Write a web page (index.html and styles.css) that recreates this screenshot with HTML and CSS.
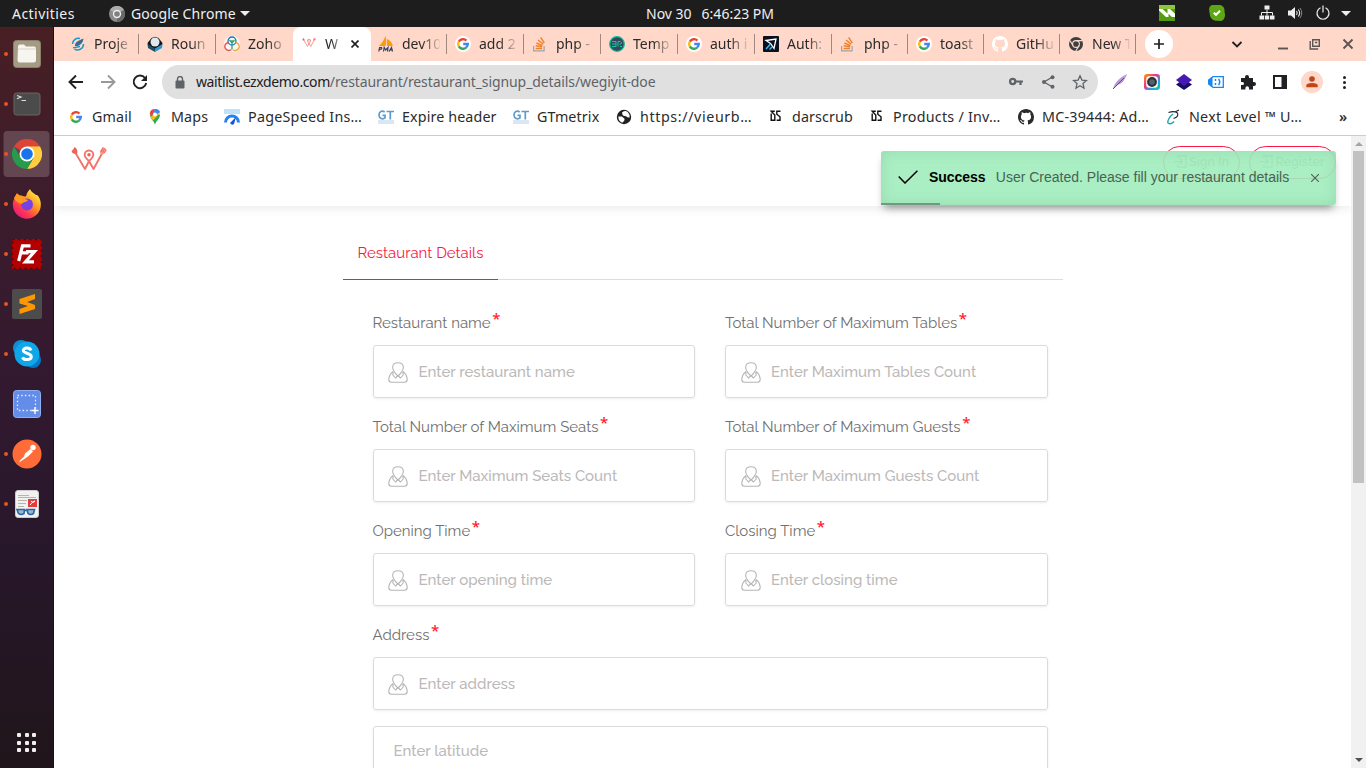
FILE: index.html
```html
<!DOCTYPE html>
<html lang="en">
<head>
<meta charset="utf-8">
<title>Restaurant Details</title>
<link rel="stylesheet" href="styles.css">
</head>
<body>
<svg class="defs" width="0" height="0">
  <defs>
    <symbol id="google" viewBox="0 0 16 16"><g fill="none" stroke-width="2.4"><path stroke="#ea4335" d="M3.8 5.6A4.8 4.8 0 0 1 11.4 4.6"/><path stroke="#fbbc05" d="M3.8 5.6a4.8 4.8 0 0 0 0 4.8"/><path stroke="#34a853" d="M3.8 10.4a4.8 4.8 0 0 0 7.3 1.2"/><path stroke="#4285f4" d="M8.2 8h4.6a4.8 4.8 0 0 1-1.7 3.6"/></g></symbol>
    <symbol id="stack" viewBox="0 0 16 16"><path fill="none" stroke="#9aa6ac" stroke-width="1.2" d="M1.600 10v4.800h10.500V10"/><path stroke="#f48024" stroke-width="1.4" d="M3.600 12.500h6.400M3.700 9.800l6.400 1M4.400 7l6 2.600M6 4l5.200 4.300M8.600 1.400l3.700 5.600"/></symbol>
    <symbol id="github" viewBox="0 0 16 16"><path fill="currentColor" d="M8 0C3.58 0 0 3.58 0 8c0 3.54 2.29 6.53 5.47 7.59.4.07.55-.17.55-.38 0-.19-.01-.82-.01-1.49-2.01.37-2.53-.49-2.69-.94-.09-.23-.48-.94-.82-1.13-.28-.15-.68-.52-.01-.53.63-.01 1.08.58 1.23.82.72 1.21 1.87.87 2.33.66.07-.52.28-.87.51-1.07-1.78-.2-3.64-.89-3.64-3.95 0-.87.31-1.59.82-2.15-.08-.2-.36-1.02.08-2.12 0 0 .67-.21 2.2.82A7.6 7.6 0 0 1 8 3.86c.68 0 1.36.09 2 .27 1.53-1.04 2.2-.82 2.2-.82.44 1.1.16 1.92.08 2.12.51.56.82 1.27.82 2.15 0 3.07-1.87 3.75-3.65 3.95.29.25.54.73.54 1.48 0 1.07-.01 1.93-.01 2.2 0 .21.15.46.55.38A8.01 8.01 0 0 0 16 8c0-4.42-3.58-8-8-8z"/></symbol>
    <symbol id="wlogo" viewBox="0 0 36 26"><g fill="none" stroke="#f4736b" stroke-width="1.900" stroke-linejoin="round" stroke-linecap="round"><path d="M4.500 7l9.500 16L18 15l4.500 8L31 7.500"/><path d="M18 15c-3-2.500-4.300-4.300-4.300-6.200a4.300 4.300 0 0 1 8.600 0c0 1.900-1.300 3.700-4.300 6.200z"/></g><circle cx="18" cy="8.800" r="1.800" fill="#f0635c"/><path fill="#f0635c" d="M3.500 1c2.500 1.500 3.700 4.300 2.500 7C2.500 8.500.5 6.800.7 4.800 1.500 4 3 3 3.500 1z"/><path fill="#f79f99" d="M29 4.500L32 1l3.500 2-1.500 4-3.500 1.500-1.500-1z"/><path d="M30 6l2-4.500M31.500 6.500l2.300-4M32.500 7.500l3-3.500" fill="none" stroke="#f0635c"/></symbol>
    <symbol id="person" viewBox="0 0 20 21"><g fill="none" stroke="#b5b5b5" stroke-width="1.100" stroke-linejoin="round"><path d="M6.200 9.500C4.800 7.800 4.500 6 4.700 4.600 5 2.200 7 .8 10 .8s5 1.400 5.300 3.800c.2 1.400-.1 3.200-1.500 4.900Q13 11.500 10 14 7 11.500 6.200 9.500z"/><path d="M5 9.500C3 11 1 13.500.8 17.500c0 1.800 1 2.700 2.700 2.700h13c1.700 0 2.700-.9 2.700-2.700C19 13.500 17 11 15 9.500M5.200 9.800L4.800 13l2.700 3L10 13.500l2.500 2.500 2.700-3-.4-3.200"/></g></symbol>
    <symbol id="signin" viewBox="0 0 14 14"><path fill="none" stroke="currentColor" stroke-width="1.200" d="M4 3.500V1h9v12H4v-2.500M0 7h9M6 4l3 3-3 3"/></symbol>
    <symbol id="gt" viewBox="0 0 16 16"><path fill="#dbe6f2" d="M0 11h16v4H0z"/><path fill="none" stroke="#5c9bcb" stroke-width="1.700" d="M6.700 3.200C4 .8 1 3 1 6c0 3.600 3.800 4.700 6 2.900V6.300H4.500M8.500 2.500H16M12.300 2.500v8"/></symbol>
    <symbol id="ds" viewBox="0 0 16 16"><path fill="none" stroke="#111" stroke-width="1.400" d="M3.200 4.500v6.800h3.600V6L3.200 2.200h3.600M12.500 2.200H8.800v3l3.200 2.600v3.500H8.600"/></symbol>
    <symbol id="chrome" viewBox="0 0 30 30"><path fill="#db4437" d="M15 15L2 7.500A15 15 0 0 1 28 7.500z"/><path fill="#ffcd40" d="M15 15V7.500h13A15 15 0 0 1 15 30l6.500-11z"/><path fill="#259b4b" d="M15 15l6.500 3.700L15 30A15 15 0 0 1 2 7.500l6.500 11z"/><circle cx="15" cy="15" r="7.500" fill="#fff"/><circle cx="15" cy="15" r="5.800" fill="#1a73e8"/></symbol>
    <symbol id="monochrome" viewBox="0 0 16 16"><circle cx="8" cy="8" r="7" fill="currentColor"/><g fill="none" stroke="#ffd8ca" stroke-width="1.100"><circle cx="8" cy="8" r="3.400"/><path d="M8 4.600h6.300M5 9.600L2 4.500M11 9.600L7.800 15"/></g></symbol>
  </defs>
</svg>

<div class="topbar">
  <span class="activities">Activities</span>
  <div class="appmenu">
    <svg width="16" height="16" viewBox="0 0 16 16"><circle cx="8" cy="8" r="8" fill="#8b8b8b"/><path d="M8 8L1 4a8 8 0 0 1 14 0z" fill="#aaa"/><path d="M8 8v8a8 8 0 0 0 7-12z" fill="#686868"/><circle cx="8" cy="8" r="4.200" fill="#eee"/><circle cx="8" cy="8" r="2.800" fill="#808080"/></svg>
    <span class="appname">Google Chrome</span>
    <i class="caret"></i>
  </div>
  <div class="clock"><span>Nov 30</span><span>6:46:23 PM</span></div>
  <div class="tray">
    <svg class="t1" width="16" height="16" viewBox="0 0 16 16"><path fill="#559c10" d="M0 0h16v16H0z"/><path fill="#8cc63a" d="M0 0h16v4H0z"/><path fill="#fff" d="M0 4h3.500l5 4.500V4H11l5 4.800V12h-3L9.500 8.800V12H7L0 5.500z"/></svg>
    <svg class="t2" width="16" height="16" viewBox="0 0 16 16"><path fill="#5fa614" d="M3 0h7c4 0 6 3 5.500 7 1 3 .5 6-1.500 8-2 1.500-4 .8-5 .8C5 16 1 14 .8 9-.5 4 0 1 3 0z"/><path fill="none" stroke="#fff" stroke-width="2" d="M4.800 7.700L7 9.800l4-4"/></svg>
    <svg class="t3" width="16" height="16" viewBox="0 0 16 16"><path fill="#eee" d="M5.500.5h5v4h-5zM.5 10.500h4.500v4H.5zM5.800 10.500h4.400v4H5.800zM11 10.500h4.500v4H11z"/><path fill="none" stroke="#eee" d="M8 4.500v6M2.500 10.500v-3h11v3"/></svg>
    <svg class="t4" width="16" height="16" viewBox="0 0 16 16"><path fill="#eee" d="M1 5.500h3L8 2v12L4 10.500H1z"/><path fill="none" stroke="#eee" stroke-width="1.100" d="M9.500 6q1.500 2 0 4M11.300 4.500q2.700 3.500 0 7"/><path fill="none" stroke="#888" d="M13 3q3.500 5 0 10"/></svg>
    <svg class="t5" width="16" height="16" viewBox="0 0 16 16"><path fill="none" stroke="#eee" stroke-width="1.200" d="M5.500 2.800a6 6 0 1 0 5 0M8 .5v7"/></svg>
    <i class="caret"></i>
  </div>
</div>

<div class="desktop">
  <nav class="dock">
    <div class="app on"><svg width="30" height="30" viewBox="0 0 30 30"><rect x="1.500" y="1.500" width="27" height="27" rx="3" fill="#a59b85" stroke="#888069"/><path fill="#f7f5ef" d="M6 7.500q0-2 2-2h4l2 2h8q2 0 2 2V21q0 2.500-2.500 2.500h-14Q5.500 23.500 5.500 21z"/><path stroke="#d7d3c8" d="M6 10h18"/></svg></div>
    <div class="app on"><svg width="30" height="30" viewBox="0 0 30 30"><rect x="2" y="4" width="26" height="22" rx="2.500" fill="#4b4b4b" stroke="#6b6463"/><path fill="none" stroke="#ddd" stroke-width="1.200" d="M5 6.500l4 1.500-4 1.700M9.500 11.500H14"/></svg></div>
    <div class="app on active"><svg width="30" height="30"><use href="#chrome"/></svg></div>
    <div class="app on"><svg width="30" height="30" viewBox="0 0 30 30"><defs><linearGradient id="fx" x1="1" y1="0" x2=".2" y2="1"><stop offset=".1" stop-color="#fff44f"/><stop offset=".45" stop-color="#ff9a20"/><stop offset=".75" stop-color="#ff3750"/><stop offset="1" stop-color="#e31587"/></linearGradient></defs><path fill="url(#fx)" d="M18 0c1 3 4 4 6 6 2-1 5 5 4.800 9A14 14 0 1 1 2 10l3-5c1 1 2 2 4 2l5 .5c1-4 2-5 4-7.500z"/><circle cx="15" cy="15.500" r="6" fill="#7542e5"/><path fill="#ff9a20" d="M2 9l3-5c2 3 4 2 6 3 1 2 1 3 5 4-2 3-4 1-6 4-3-1-6-2-8-6z"/></svg></div>
    <div class="app on"><svg width="30" height="30" viewBox="0 0 30 30"><path fill="#b30000" d="M0 0h30v30H0z"/><path fill="none" stroke="#4a0810" stroke-width="1.500" stroke-dasharray="2 3.600" d="M.5.500h29v29H.5z"/><path fill="none" stroke="#fff" stroke-width="3.200" d="M18.500 6.800h-8L6.700 22M9.500 13.800h7M14 12.600h8.500L13.500 22.800H22"/></svg></div>
    <div class="app on"><svg width="30" height="30" viewBox="0 0 30 30"><rect width="30" height="30" rx="2" fill="#4c4c4c"/><path fill="#ff9800" d="M7.500 10L23 5v5l-8 3 8 3v4L7.500 25v-5l8.500-3-8.500-2.500z"/></svg></div>
    <div class="app on"><svg width="30" height="30" viewBox="0 0 30 30"><circle cx="9" cy="9" r="8" fill="#0e8fd4"/><circle cx="21" cy="21" r="8" fill="#0676c8"/><circle cx="15" cy="15" r="12.500" fill="#10a7e8"/><path fill="none" stroke="#fff" stroke-width="3" d="M19 11.500c-1.500-3.500-8-3-7.700.3.400 2.700 7.700 2.200 8 5.700.2 4-7.300 4-8.800.8"/></svg></div>
    <div class="app"><svg width="30" height="30" viewBox="0 0 30 30"><rect x="1.500" y="1.500" width="27" height="27" rx="3" fill="#648de9" stroke="#8fb0f3"/><path fill="none" stroke="#e4ecff" stroke-width="1.300" stroke-dasharray="1.500 2.200" d="M5.500 6.500h18v15h-18z"/><path stroke="#fff" stroke-width="1.400" d="M23 18v7M19.500 21.500h7"/></svg></div>
    <div class="app on"><svg width="30" height="30" viewBox="0 0 30 30"><circle cx="15" cy="15" r="14.500" fill="#ff6c37"/><circle cx="21" cy="8.500" r="2.700" fill="#fff"/><path fill="#fff" d="M18.500 10l2.500 2.500-5 5-9 6 1-2 4-4 1-3z"/></svg></div>
    <div class="app on"><svg width="30" height="30" viewBox="0 0 30 30"><rect x="3.500" y="1.500" width="23" height="27" rx="2.500" fill="#f1f1ef" stroke="#ccc"/><path stroke="#b7b4ac" d="M6 6.500h11M6 8.500h18M6 11.500h9M6 14.500h8M6 17.500h6"/><path fill="#e53b3b" d="M16 10h9v8h-9z"/><path fill="none" stroke="#fff" d="M18 16q3-4 5-4-2 3-4 0"/><g fill="#9fb6c8" stroke="#2765a8" stroke-width="1.600"><path d="M5 20.500h7.500l-.5 4q-3 2-5.500 0zM15 20.500h7.500l-1 4q-3 2-5.500 0zM12 21.500h3"/></g></svg></div>
    <div class="grid-btn"><i></i><i></i><i></i><i></i><i></i><i></i><i></i><i></i><i></i></div>
  </nav>

  <div class="window">
    <div class="tabstrip">
      <div class="tab"><svg viewBox="0 0 16 16"><path fill="none" stroke="#1698cb" stroke-width="1.500" d="M10 2.500A6 6 0 0 0 2.500 8M4.500 13.200A6 6 0 0 0 13.500 8"/><path fill="#3a6c92" d="M5 10c0-4.500 3.500-5 8.500-7.500-.5 4.500-3.500 8-8.500 7.500z"/><path stroke="#1698cb" stroke-width="1.300" d="M3 11.800l7-1.300"/></svg><span>Proje</span></div>
      <div class="tab"><svg viewBox="0 0 16 16"><path fill="#151515" d="M.5 7l4-5L8 .8 11.500 2l4 5-1 4L8 15l-6.500-4z"/><path fill="#1b4f66" d="M.5 8l7.500 4.500V16L1 12z"/><path fill="#2b9ad0" d="M15.500 8L8 12.500V16l7-4z"/><circle cx="8" cy="6" r="4.500" fill="#dfe8ee"/></svg><span>Roun</span></div>
      <div class="tab"><svg viewBox="0 0 16 16"><circle cx="8" cy="8" r="8" fill="#fff" opacity=".7"/><g fill="none" stroke-width="1.300"><circle cx="8" cy="5" r="4" stroke="#1480b8"/><path stroke="#e34b4b" d="M4.500 6.500a4 4 0 1 0 3 7"/><path stroke="#e7a93d" d="M11.500 6.500a4 4 0 1 1-3 7"/><path stroke="#35a17c" d="M8 4v9M5.500 4l2.500 3 2.500-3"/></g></svg><span>Zoho</span></div>
      <div class="tab current"><svg viewBox="0 0 16 16"><use href="#wlogo" x="1" y="1.500" width="14" height="10"/></svg><span>W</span><b class="close"><svg viewBox="0 0 8 8"><path d="M.5.500l7 7M7.500.500l-7 7"/></svg></b></div>
      <div class="tab"><svg viewBox="0 0 16 16"><path fill="#f89c0e" d="M7.500 0c1 4 1 7 0 10H1C4 7 6 4 7.500 0zM9 3c4 2 5 4 6 7H9z"/><path fill="none" stroke="#34415f" stroke-width="1.200" d="M.8 15.500l.8-4h2q1 1.500-2 2M5.500 15.500l.7-4 1.500 2.500L10 11.500l-.5 4M11 15.500l2.500-4 1 4M12 14h2"/></svg><span>dev10</span></div>
      <div class="tab halo"><svg><use href="#google"/></svg><span>add 2</span></div>
      <div class="tab"><svg><use href="#stack"/></svg><span>php -</span></div>
      <div class="tab"><svg viewBox="0 0 16 16"><circle cx="8" cy="8" r="7.300" fill="#34495e" stroke="#10b997" stroke-width="1.300"/><path fill="none" stroke="#16c59a" d="M3 5.500h4v5H3m0-2.500h4M9 10.500v-5h2.500q2 1 .5 2.500h-1.500M11 10.500h2"/></svg><span>Temp</span></div>
      <div class="tab halo"><svg><use href="#google"/></svg><span>auth i</span></div>
      <div class="tab"><svg viewBox="0 0 16 16"><rect width="16" height="16" rx="1" fill="#0b1020"/><path fill="none" stroke="#fff" stroke-width="1.300" d="M3 4.500L13 3l-2 9.500-3.500-5z"/><path stroke="#31bdf2" stroke-width="1.500" d="M3 13l4.500-5M6.500 13.500L9 11"/></svg><span>Auth:</span></div>
      <div class="tab n"><svg><use href="#stack"/></svg><span>php -</span></div>
      <div class="tab n halo"><svg><use href="#google"/></svg><span>toast</span></div>
      <div class="tab n white"><svg><use href="#github"/></svg><span>GitHu</span></div>
      <div class="tab n grey"><svg><use href="#monochrome"/></svg><span>New T</span></div>
      <div class="newtab"><svg width="12" height="12" viewBox="0 0 12 12"><path stroke="#222" stroke-width="1.700" d="M6 1v10M1 6h10"/></svg></div>
      <div class="wm">
        <svg width="12" height="12" viewBox="0 0 12 12"><path class="dark" d="M1.500 4L6 8.500 10.500 4"/></svg>
        <svg width="12" height="12" viewBox="0 0 12 12"><path d="M1 10.500h10"/></svg>
        <svg width="12" height="12" viewBox="0 0 12 12"><path stroke-width="1.400" d="M3.700 1.700h6.600v6.600H3.700zM6 4.500h2.300M1.200 3v8h8"/></svg>
        <svg width="12" height="12" viewBox="0 0 12 12"><path d="M1.500 1.500l9 9M10.500 1.500l-9 9"/></svg>
      </div>
    </div>

    <div class="toolbar">
      <div class="navs">
        <svg width="16" height="16" viewBox="0 0 16 16"><path d="M15 8H2M8 1.500L1.500 8 8 14.500"/></svg>
        <svg class="dim" width="16" height="16" viewBox="0 0 16 16"><path d="M1 8h13M8 1.500L14.500 8 8 14.500"/></svg>
        <svg width="16" height="16" viewBox="0 0 16 16"><path d="M13 4A6.300 6.300 0 1 0 14.200 9"/><path fill="#222" stroke="none" d="M15 1v6H9z"/></svg>
      </div>
      <div class="omnibox">
        <svg width="10" height="13" viewBox="0 0 10 13"><rect y="4.500" x=".5" width="9" height="8" rx="1" fill="#5f6368"/><path fill="none" stroke="#5f6368" stroke-width="1.400" d="M2.500 5V3a2.500 2.500 0 0 1 5 0v2"/></svg>
        <div class="url"><span class="host">waitlist.ezxdemo.com</span><span class="path">/restaurant/restaurant_signup_details/wegiyit-doe</span></div>
        <div class="acts">
          <svg width="16" height="16" viewBox="0 0 16 16"><circle cx="4.700" cy="7.500" r="2.600" stroke-width="2.300"/><path stroke-width="2.200" d="M7 7.500h8M12.500 7.500V11"/></svg>
          <svg width="16" height="16" viewBox="0 0 16 16"><path stroke-width="1.300" d="M12.500 3L4 8l8.500 5"/><g fill="#5f6368" stroke="none"><circle cx="12.500" cy="3.200" r="2"/><circle cx="4" cy="8" r="2"/><circle cx="12.500" cy="12.800" r="2"/></g></svg>
          <svg width="16" height="16" viewBox="0 0 16 16"><path stroke-width="1.300" d="M8 1.800l1.900 4.300 4.600.4-3.500 3.100 1 4.600L8 11.800l-4 2.400 1-4.600L1.500 6.500l4.600-.4z"/></svg>
        </div>
      </div>
      <div class="exts">
        <svg viewBox="0 0 16 16"><path fill="#b79ad8" d="M1 15C3 8 7 4 15 0c-2 6-5 10-10 11z"/><path stroke="#6b3ba0" fill="none" d="M1 15L12 4"/></svg>
        <svg viewBox="0 0 16 16"><defs><linearGradient id="cam" x1="0" y1="0" x2="1" y2="1"><stop stop-color="#ff9d00"/><stop offset=".4" stop-color="#f13482"/><stop offset=".7" stop-color="#16a9ef"/><stop offset="1" stop-color="#1fd27c"/></linearGradient></defs><rect width="16" height="16" rx="3" fill="url(#cam)"/><rect x="2.200" y="2.200" width="11.600" height="11.600" rx="3" fill="#fff"/><circle cx="8" cy="8" r="4.900" fill="#2a3238"/><circle cx="8" cy="8" r="2.800" fill="#53636d"/></svg>
        <svg viewBox="0 0 16 16"><path fill="#160c63" d="M0 10.500L8 5l8 5.500L8 16z"/><path fill="#4619b5" d="M0 6l8-6 8 6-8 6z"/></svg>
        <svg viewBox="0 0 16 16"><path fill="none" stroke="#1688f5" stroke-width="1.300" d="M5 2.600h10.300v10.800H5L.8 10V6z"/><path fill="#1688f5" d="M0 6l4.500-3.500v11L0 10z"/><path fill="none" stroke="#1688f5" stroke-width="1.500" d="M7.500 5v2M7.500 9v2M10.500 5q2.500 3 0 6"/></svg>
        <svg viewBox="0 0 16 16"><path fill="#202124" d="M1 4h4V3a2 2 0 0 1 4 0v1h4v4h1a2 2 0 0 1 0 4h-1v3.500H9V14a1.800 1.800 0 0 0-3.600 0v1.500H1V11h1.500a1.500 1.500 0 0 0 0-3H1z"/></svg>
        <svg viewBox="0 0 16 16"><path fill="none" stroke="#202124" stroke-width="2" d="M2 2h12v12H2z"/><path fill="#202124" d="M9.500 2H14v12H9.500z"/></svg>
        <div class="avatar"><svg viewBox="0 0 16 16"><circle cx="8" cy="4.500" r="3.200" fill="#bf4618"/><path fill="#bf4618" d="M1.500 14V12q0-3 6.500-3t6.500 3v2z"/></svg></div>
        <div class="kebab"><i></i><i></i><i></i></div>
      </div>
    </div>

    <div class="bookmarks">
      <a><svg><use href="#google"/></svg><span>Gmail</span></a>
      <a><svg viewBox="0 0 16 16"><path fill="#34a853" d="M8 16c-.7-4-5-6-5-10.500h10C13 10 8.700 12 8 16z"/><path fill="#4285f4" d="M8 0a5.500 5.500 0 0 1 4.700 3L7 10 4.500 7z"/><path fill="#fbbc04" d="M3.500 8L11 1.500 13 4 6 11.500z"/><path fill="#ea4335" d="M2.700 5A5.500 5.500 0 0 1 8 0L5 7z"/><path fill="#4285f4" d="M8 0q4 0 5 3L10 5 7 3z"/><circle cx="8" cy="5.500" r="2" fill="#fff"/></svg><span>Maps</span></a>
      <a><svg viewBox="0 0 16 16"><path fill="#bfe2fb" d="M0 0h16v5H0z"/><path fill="none" stroke="#2781f5" stroke-width="3" d="M1.500 13.500a6.500 6.500 0 0 1 13 0"/><path fill="#1657d5" d="M6 14l6-6-2 7q-2 2-4-1z"/></svg><span>PageSpeed Ins…</span></a>
      <a><svg><use href="#gt"/></svg><span>Expire header</span></a>
      <a><svg><use href="#gt"/></svg><span>GTmetrix</span></a>
      <a><svg viewBox="0 0 16 16"><circle cx="8" cy="8" r="7.200" fill="#202124"/><path fill="#fff" d="M2.300 7.500h3.500l2.500 2q1 2-2 4.200-4-1.500-4-6.200zM6 3.500q4-3 6.500.5 1.500 2 1.200 4.500l-2.500-.3q-1-1.500-3.200-1.200Q6 6 6 3.500z"/></svg><span>https://vieurb…</span></a>
      <a><svg><use href="#ds"/></svg><span>darscrub</span></a>
      <a><svg><use href="#ds"/></svg><span>Products / Inv…</span></a>
      <a><svg><use href="#github"/></svg><span>MC-39444: Ad…</span></a>
      <a><svg viewBox="0 0 16 16"><path fill="none" stroke="#18a3ad" stroke-width="1.400" d="M8 5C5 7 2 12 3 14q3 2 6-1.500"/><path fill="none" stroke="#223" stroke-width="1.100" d="M3.500 3.500q6-2 9 .5 1.500 4-4 5.500M10 3l4-2"/></svg><span>Next Level ™ U…</span></a>
      <b>»</b>
    </div>

    <div class="viewport">
      <div class="page">
        <header class="site-header">
          <svg class="logo" width="36" height="26"><use href="#wlogo"/></svg>
          <div class="auth">
            <a class="pill"><svg width="13" height="13"><use href="#signin"/></svg>Sign In</a>
            <a class="pill reg"><svg width="13" height="13"><use href="#signin"/></svg>Register</a>
          </div>
        </header>
        <main class="content">
          <div class="form-tabs"><a>Restaurant Details</a></div>
          <form class="form">
            <div class="field"><label>Restaurant name<sup>*</sup></label><div class="box"><svg><use href="#person"/></svg><input placeholder="Enter restaurant name"></div></div>
            <div class="field"><label>Total Number of Maximum Tables<sup>*</sup></label><div class="box"><svg><use href="#person"/></svg><input placeholder="Enter Maximum Tables Count"></div></div>
            <div class="field"><label>Total Number of Maximum Seats<sup>*</sup></label><div class="box"><svg><use href="#person"/></svg><input placeholder="Enter Maximum Seats Count"></div></div>
            <div class="field"><label>Total Number of Maximum Guests<sup>*</sup></label><div class="box"><svg><use href="#person"/></svg><input placeholder="Enter Maximum Guests Count"></div></div>
            <div class="field"><label>Opening Time<sup>*</sup></label><div class="box"><svg><use href="#person"/></svg><input placeholder="Enter opening time"></div></div>
            <div class="field"><label>Closing Time<sup>*</sup></label><div class="box"><svg><use href="#person"/></svg><input placeholder="Enter closing time"></div></div>
            <div class="field wide"><label>Address<sup>*</sup></label><div class="box"><svg><use href="#person"/></svg><input placeholder="Enter address"></div></div>
            <div class="field wide"><div class="box plain"><input placeholder="Enter latitude"></div></div>
          </form>
        </main>
        <div class="toast">
          <svg class="tick" width="20" height="14" viewBox="0 0 20 14"><path fill="none" stroke="#000" stroke-width="1.500" d="M.7 6.500L7 13 19.400.7"/></svg>
          <strong>Success</strong>
          <span class="msg">User Created. Please fill your restaurant details</span>
          <svg class="x" width="8" height="8" viewBox="0 0 8 8"><path stroke="#476454" stroke-width="1.100" d="M0 0l8 8M8 0L0 8"/></svg>
          <i class="progress"></i>
        </div>
      </div>
      <div class="scrollbar"><i class="up"></i><div class="thumb"></div><i class="down"></i></div>
    </div>
  </div>
</div>
</body>
</html>
```
FILE: styles.css
```css
* { box-sizing: border-box; }
body { margin: 0; width: 1366px; height: 768px; overflow: hidden; display: flex; flex-direction: column; font-family: "Noto Sans", sans-serif; background: #fff; }
.defs { position: absolute; }
svg { flex: none; display: block; }

.topbar { height: 27px; flex: none; background: #1d1d1d; color: #f0f0f0; display: grid; grid-template-columns: 109px 537px 500px 1fr; align-items: center; font-size: 14px; }
.activities { padding-left: 12px; letter-spacing: .45px; }
.appmenu { display: flex; align-items: center; gap: 6px; }
.appname { width: 103px; white-space: nowrap; letter-spacing: .1px; }
.caret { border: 5px solid transparent; border-top-color: #eee; border-bottom: 0; }
.clock { display: flex; gap: 10px; letter-spacing: 0; padding-bottom: 1px; }
.tray { display: flex; align-items: center; padding-left: 13px; padding-bottom: 1px; }
.t2 { margin-left: 34px; }
.t3 { margin-left: 34px; }
.t4 { margin-left: 12px; }
.t5 { margin-left: 12px; }
.tray .caret { margin-left: 10px; }

.desktop { flex: 1; display: flex; min-height: 0; }
.dock { width: 54px; flex: none; padding-top: 4px; background: linear-gradient(#481f23 0, #3f1d2b 18%, #321930 48%, #27172a 72%, #20151a 100%); border-right: 1px solid #1c1018; display: flex; flex-direction: column; align-items: center; gap: 4px; }
.app { width: 54px; height: 46px; display: flex; align-items: center; }
.app::before { content: ""; width: 4px; height: 4px; border-radius: 2px; margin: 0 4px; flex: none; }
.app.on::before { background: #e95420; }
.app.active { background: #644650; clip-path: inset(0 4px 0 4px round 4px); }
.grid-btn { margin: auto 0 16px; display: grid; grid-template-columns: repeat(3, 4px); gap: 3.500px; }
.grid-btn i { width: 4px; height: 4px; background: #eee; border-radius: 1px; }

.window { flex: 1; min-width: 0; display: flex; flex-direction: column; }
.tabstrip { height: 34px; flex: none; background: #ffd8ca; display: flex; align-items: center; padding-left: 8px; color: #2b2b2b; font-size: 14px; }
.tab { width: 77px; flex: none; height: 20px; display: flex; align-items: center; gap: 8px; padding-left: 8px; border-right: 1px solid #a1887f; }
.tab.n { width: 76px; }
.tab > svg { width: 16px; height: 16px; }
.tab span { width: 44px; line-height: 20px; white-space: nowrap; -webkit-mask-image: linear-gradient(90deg, #000 20px, rgba(0,0,0,.15) 37px, transparent 38px); mask-image: linear-gradient(90deg, #000 20px, rgba(0,0,0,.15) 37px, transparent 38px); }
.tab:nth-child(3) { border-color: transparent; }
.tab.halo > svg { background: #fff; border-radius: 50%; }
.tab.white > svg { color: #fff; }
.tab.grey > svg { color: #3c4043; }
.tab.current { height: 34px; background: #fff; border: 0; border-radius: 8px 8px 0 0; width: 78px; margin-right: -1px; }
.tab.current span { width: 14px; -webkit-mask-image: linear-gradient(90deg, #000 7px, rgba(0,0,0,.4)); mask-image: linear-gradient(90deg, #000 7px, rgba(0,0,0,.4)); }
.close { padding-left: 4px; }
.close svg { width: 8px; height: 8px; stroke: #222; stroke-width: 1.700; }
.newtab { width: 28px; height: 28px; margin-left: 9px; border-radius: 50%; background: #fff; display: grid; place-items: center; }
.wm { display: flex; align-items: center; margin-left: 58px; }
.wm svg { fill: none; stroke: #5c5552; stroke-width: 1.900; }
.wm .dark { stroke: #222; }
.wm svg:nth-child(2) { margin-left: 34px; }
.wm svg:nth-child(3) { margin-left: 20px; }
.wm svg:nth-child(4) { margin-left: 21px; }

.toolbar { height: 42px; flex: none; display: flex; align-items: center; }
.navs { width: 108px; padding-left: 14px; display: flex; gap: 16px; }
.navs svg { fill: none; stroke: #222; stroke-width: 1.900; }
.navs .dim { stroke: #999; }
.omnibox { width: 936px; height: 34px; border-radius: 17px; background: #e0e0e0; display: flex; align-items: center; padding: 0 10px 0 13px; }
.url { margin-left: 11px; font-size: 14px; color: #5f6368; white-space: nowrap; padding-bottom: 2px; }
.host { color: #202124; letter-spacing: -.4px; }
.path { letter-spacing: -.09px; }
.acts { margin-left: auto; display: flex; gap: 16px; }
.acts svg { fill: none; stroke: #5f6368; }
.exts { display: flex; align-items: center; margin-left: 14px; gap: 16px; }
.exts > svg { width: 16px; height: 16px; }
.avatar { width: 22px; height: 22px; margin: 0 -3px; border-radius: 50%; background: #ffd8ca; display: grid; place-items: center; }
.avatar svg { width: 14px; height: 14px; }
.kebab { width: 16px; display: grid; justify-items: center; gap: 2px; }
.kebab i { width: 3px; height: 3px; border-radius: 50%; background: #222; }

.bookmarks { height: 33px; flex: none; border-bottom: 1px solid #ccc; display: grid; grid-template-columns: 79px 77px 154px 135px 103px 152px 101px 149px 147px 174px auto; align-items: center; padding: 0 0 5px 14px; color: #2b2b2b; font-size: 14.300px; }
.bookmarks a { display: flex; align-items: center; gap: 8px; white-space: nowrap; letter-spacing: .12px; }
.bookmarks a:nth-child(3), .bookmarks a:nth-child(8), .bookmarks a:nth-child(10) { letter-spacing: .25px; }
.bookmarks a:nth-child(6) { letter-spacing: .6px; }
.bookmarks a:nth-child(9) { letter-spacing: .22px; }
.bookmarks a svg { width: 16px; height: 16px; }
.bookmarks b { font-weight: 600; }

.viewport { flex: 1; min-height: 0; display: flex; }
.page { position: relative; flex: 1; overflow: hidden; font-family: Raleway, Lato, sans-serif; font-size: 15px; color: #707070; }
.site-header { height: 70px; box-shadow: 0 0 12px rgba(0,0,0,.12); display: flex; justify-content: space-between; padding: 10px 16px 0 17px; }
.auth { display: flex; gap: 9px; }
.pill { width: 77px; height: 33px; border: 1px solid #f91942; border-radius: 17px; display: flex; align-items: center; justify-content: center; gap: 2px; font: 600 12.500px Raleway, Lato, sans-serif; color: #999; padding-bottom: 3px; }
.pill.reg { width: 87px; }
.auth { margin-right: -1px; }
.content { width: 720px; margin: 0 auto 0 289px; padding-top: 21px; }
.form-tabs { border-bottom: 1px solid #ddd; display: flex; height: 53px; }
.form-tabs a { width: 155px; padding-left: 14.500px; height: 53px; line-height: 52px; border-bottom: 1px solid #f91942; color: #f91942; white-space: nowrap; }
.form { display: grid; grid-template-columns: 322.500px 322.500px; column-gap: 30px; padding: 30px 15px 0 29.500px; }
.field { height: 104px; }
.wide { grid-column: 1 / -1; }
.field label { display: block; height: 35px; line-height: 26px; white-space: nowrap; }
.field sup { color: #ff1f30; font: 600 15px/0 "Open Sans", sans-serif; vertical-align: 4px; margin-left: 1.500px; }
.box { height: 53px; border: 1px solid #dbdbdb; border-radius: 3px; box-shadow: 0 1px 3px rgba(0,0,0,.07); display: flex; align-items: center; padding-left: 14.500px; }
.box svg { width: 20px; height: 21px; margin-top: 1px; }
.box input { flex: 1; min-width: 0; border: 0; outline: 0; padding: 0; margin-left: 10.500px; font: inherit; font-weight: 500; background: none; }
.box input::placeholder { color: #bcb9b9; opacity: 1; }
.box.plain { padding-bottom: 3px; }
.box.plain input { margin-left: 5.500px; }

.toast { position: absolute; top: 15px; right: 15px; width: 455px; height: 54px; padding: 0 17px 1px; border-radius: 3px; background: rgba(161,236,188,.9); box-shadow: inset 0 0 14px rgba(70,150,100,.2), 0 6px 8px -3px rgba(0,0,0,.4); display: flex; align-items: center; font: 14px "Liberation Sans", sans-serif; color: #476454; }
.toast .tick { margin-bottom: 1px; }
.toast strong { margin-left: 11px; color: #000; width: 67.500px; letter-spacing: -.05px; }
.msg { width: 318.500px; white-space: nowrap; }
.toast .x { margin-top: 1px; }
.toast strong, .msg { padding-bottom: 1px; }
.progress { position: absolute; left: 0; bottom: 0; width: 59px; height: 2px; background: #6f9a7e; }

.scrollbar { width: 15px; background: #f1f1f1; display: flex; flex-direction: column; align-items: center; }
.up, .down { border: 4px solid transparent; }
.up { border-bottom: 4px solid #a3a3a3; border-top: 0; margin: 6px 0 5px; }
.thumb { width: 11px; height: 332px; background: #c1c1c1; }
.down { border-top: 4px solid #505050; border-bottom: 0; margin: auto 0 6px; }
```
